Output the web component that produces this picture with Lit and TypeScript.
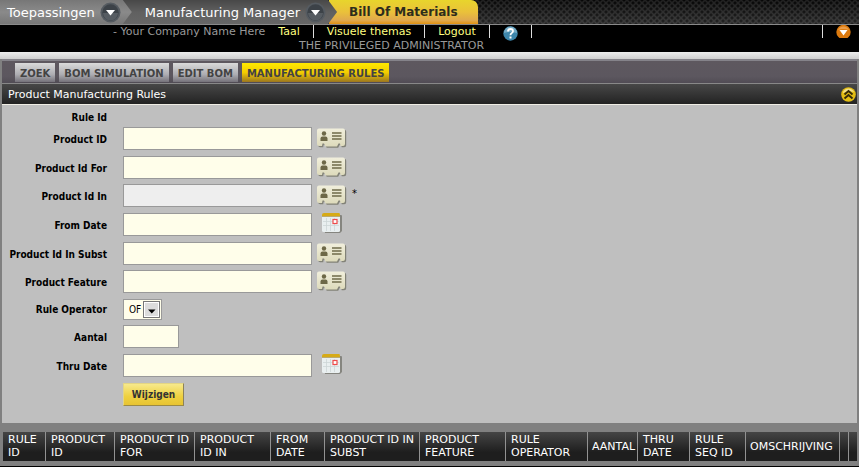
import { LitElement, html, css } from "lit";
import { customElement } from "lit/decorators.js";

type Field = { id: string; label: string; kind: "lookup" | "date" | "select" | "short" | "text"; tight?: boolean; readonly?: boolean };

const FIELDS: Field[] = [
  { id: "productId", label: "Product ID", kind: "lookup" },
  { id: "productIdFor", label: "Product Id For", kind: "lookup", tight: true },
  { id: "productIdIn", label: "Product Id In", kind: "lookup", readonly: true },
  { id: "fromDate", label: "From Date", kind: "date" },
  { id: "productIdInSubst", label: "Product Id In Subst", kind: "lookup", tight: true },
  { id: "productFeature", label: "Product Feature", kind: "lookup" },
  { id: "ruleOperator", label: "Rule Operator", kind: "select" },
  { id: "quantity", label: "Aantal", kind: "short" },
  { id: "thruDate", label: "Thru Date", kind: "date" },
];

const COLUMNS: [string, number][] = [
  ["RULE ID", 42], ["PRODUCT ID", 69], ["PRODUCT ID FOR", 80], ["PRODUCT ID IN", 76],
  ["FROM DATE", 54], ["PRODUCT ID IN SUBST", 95], ["PRODUCT FEATURE", 86],
  ["RULE OPERATOR", 82], ["AANTAL", 50], ["THRU DATE", 52], ["RULE SEQ ID", 56],
  ["OMSCHRIJVING", 94], ["", 9], ["", 9],
];

const cardIcon = html`<svg width="30" height="21" viewBox="0 0 30 21" aria-hidden="true">
  <defs><linearGradient id="paper" x1="0" y1="0" x2="0" y2="1"><stop offset="0" stop-color="#f1efdc"/><stop offset="1" stop-color="#dddabb"/></linearGradient></defs>
  <path transform="translate(1.200 1.200)" d="M2 .5H26Q28 .5 28 2.500V16Q28 18 26 18H23.500L23 15.500H21.500L20 18.500H8.500L7 15.500H5.500L5 18H2Q0 18 0 16V2.500Q0 .5 2 .5Z" fill="#828277"/>
  <path d="M2 .5H26Q28 .5 28 2.500V16Q28 18 26 18H23.500L23 15.500H21.500L20 18.500H8.500L7 15.500H5.500L5 18H2Q0 18 0 16V2.500Q0 .5 2 .5Z" fill="url(#paper)"/>
  <circle cx="7" cy="5.500" r="2.200" fill="#6d6847"/>
  <path d="M3.500 13V10.500Q3.500 8.500 5.500 8.500H8.500Q10.500 8.500 10.500 10.500V13Z" fill="#6d6847"/>
  <path d="M15 5H24.500M15 8H24.500M15 11H24.500" stroke="#6f6b49" stroke-width="1.400"/>
</svg>`;

const calendarIcon = html`<svg width="20" height="20" viewBox="0 0 20 20" aria-hidden="true">
  <path d="M2 2H19Q20 2 20 3V18L18 20H3Z" fill="#85857f"/>
  <rect x="0" y="1" width="18" height="18" rx="1.500" fill="#e9eff0"/>
  <path d="M0 3V1.500Q0 0 2 0H17Q18 0 18 1.500V3Z" fill="#d6aa16"/>
  <path d="M0 3.500H18" stroke="#a88c3a" stroke-width=".7"/>
  <path d="M1 8.500H17M1 12.500H17M4.500 5V18M8.500 5V18M12.500 5V18" stroke="#cdd5d7" stroke-width=".8"/>
  <rect x="11" y="6.500" width="4" height="4" fill="#fff" stroke="#ee4b4b" stroke-width="1.200"/>
</svg>`;

const roundArrow = html`<svg width="21" height="21" viewBox="0 0 21 21" aria-hidden="true">
  <circle cx="10.500" cy="10.500" r="10" fill="#555b61"/>
  <circle cx="10.500" cy="10.500" r="8.200" fill="#3c4248"/>
  <path d="M3 11A7.500 7.500 0 0 0 18 11Z" fill="#565c62"/>
  <path d="M6 8H15L10.500 13.500Z" fill="#fff"/>
</svg>`;

const helpIcon = html`<svg width="15" height="15" viewBox="0 0 15 15" aria-hidden="true">
  <circle cx="7.500" cy="7.500" r="7.200" fill="#3d86ab"/>
  <path d="M1 7A6.500 6.500 0 0 1 14 7Q7 5 1 7Z" fill="#75abc5"/>
  <path d="M5 5.500Q5 3 7.500 3T10 5.300Q10 6.500 8.500 7.300Q7.500 8 7.500 9.200" fill="none" stroke="#fff" stroke-width="1.800"/>
  <rect x="6.500" y="10.500" width="2" height="2" fill="#fff"/>
</svg>`;

const orangeIcon = html`<svg width="15" height="13" viewBox="0 0 15 13" aria-hidden="true">
  <circle cx="7.500" cy="7" r="7.200" fill="#dc7a0e"/>
  <path d="M2 5A6 6 0 0 1 13 5Q7 3 2 5Z" fill="#eb9d48"/>
  <path d="M3.500 5H11.500L7.500 10.500Z" fill="#fff"/>
</svg>`;

const collapseIcon = html`<svg width="15" height="15" viewBox="0 0 15 15" aria-hidden="true">
  <circle cx="7.500" cy="7.500" r="7.300" fill="#e3bd12"/>
  <path d="M2 5A6 6 0 0 1 13 5Q7 3 2 6Z" fill="#f3e08a"/>
  <path d="M3.500 7.500L7.500 4L11.500 7.500M3.500 11.500L7.500 8L11.500 11.500" fill="none" stroke="#352a08" stroke-width="1.900"/>
</svg>`;

@customElement("app-root")
export class AppRoot extends LitElement {
  static styles = css`
    :host { display: block; min-height: 100vh; background: #000; font-family: "DejaVu Sans", Verdana, sans-serif; font-size: 11px; }
    * { box-sizing: border-box; }
    a { text-decoration: none; color: inherit; }
    button { font: inherit; padding: 0; border: 0; background: none; cursor: pointer; }
    svg { display: block; }

    .apps { display: flex; height: 25px; border-bottom: 1px solid #8a8a8a; font-size: 13px; color: #fff;
      background-color: #333;
      background-image: linear-gradient(rgba(0,0,0,.35), rgba(80,80,80,.35)), radial-gradient(circle, #0c0c0c 1px, transparent 2px), radial-gradient(circle, #0c0c0c 1px, transparent 2px);
      background-size: auto, 6px 6px, 6px 6px; background-position: 0 0, 0 0, 3px 3px; }
    .crumb { display: flex; align-items: center; height: 24px; }
    .crumb button { display: block; }
    .first, .second { position: relative; gap: 5px;
      clip-path: polygon(0 0, calc(100% - 9px) 0, 100% 50%, calc(100% - 9px) 100%, 0 100%); }
    .first { z-index: 2; padding: 0 11px 0 7px; background: linear-gradient(#777, #8a8a8a 50%, #777); }
    .second { z-index: 1; margin-left: -12px; padding: 0 11px 0 25px; background: linear-gradient(#484848, #606060 50%, #666); }
    .current { margin-left: -8px; padding: 0 20px; border-radius: 0 7px 0 0; color: #2d2d1c; font-weight: bold;
      font-size: 12px; background: linear-gradient(#e8d52c, #eac13a 50%, #dfa84e 85%, #e2920f); }

    .user { display: flex; align-items: flex-start; height: 27px; color: #999; }
    .links { flex: 1; padding-left: 113px; }
    .line { display: flex; height: 14px; line-height: 14px; }
    .line a { padding: 0 13px; color: #ffff80; border-right: 1px solid #ddd; height: 13px; }
    .line .help { padding-top: 1px; }
    .who { padding-left: 186px; line-height: 13px; }
    .pref { padding: 0 8px 0 13px; border-left: 1px solid #ddd; height: 13px; }

    .page { padding: 7px 2px 5px; background: linear-gradient(#eee, #cfcfcf) top / 100% 7px no-repeat #808080; }
    .tabs { display: flex; gap: 4px; height: 24px; padding: 2px 13px 1px; border-top: 2px solid #85838a;
      background: linear-gradient(#5e585f, #5c575f 70%, #514c55); font-size: 10px; font-weight: bold; }
    .tabs a { line-height: 21px; padding: 0 5px; background: linear-gradient(#dadada, #adadb2 60%, #75727a); color: #434343; }
    .tabs .on { background: linear-gradient(#ffe900, #f3cd00 50%, #9b7620); }
    .title { display: flex; justify-content: space-between; align-items: center; height: 22px; margin: 0; padding: 0 1px 0 6px;
      border-top: 1px solid #888; border-bottom: 1px solid #f0eee5; color: #fff; background: linear-gradient(#474747, #232323);
      font-size: 11px; font-weight: normal; }
    form { background: #bfbfbf; padding: 6px 0 11px; }
    .row { display: grid; grid-template-columns: 105px 1fr; column-gap: 16px; height: 29px; align-items: start;
      font: bold 10px "DejaVu Sans Condensed", "DejaVu Sans", sans-serif; }
    .row.tight { height: 28px; }
    .row.select { height: 26px; }
    .row.head { height: 16px; }
    .row > label, .row > .label { text-align: right; line-height: 25px; }
    .row.head .label { line-height: 14px; }
    .row.select > label { line-height: 21px; }
    .control { display: flex; align-items: flex-start; }
    input { width: 189px; height: 23px; padding: 2px 4px; border: 1px solid #999; border-radius: 0; background: #fffeea; font: 11px "DejaVu Sans", sans-serif; }
    input:read-only { background: #eeeeee; }
    .short input { width: 56px; }
    .pick { margin: 1px 5px 0; }
    .date .pick { margin: 0 10px; }
    .star { line-height: 20px; font-weight: normal; font-size: 11px; }
    .drop { display: grid; width: 39px; height: 21px; }
    .drop select, .drop svg { grid-area: 1 / 1; }
    .drop select { appearance: none; border: 1px solid #999; border-radius: 0; background: #fffeea; padding: 0 5px;
      font: 10px "DejaVu Sans Condensed", "DejaVu Sans", sans-serif; }
    .drop svg { justify-self: end; align-self: center; margin-right: 2px; pointer-events: none; }
    .save { justify-self: start; height: 23px; width: 61px; color: #333; font-weight: bold;
      background: linear-gradient(#f7e98c, #eed03f 60%, #e8c432); border: 1px solid #e3d584; border-right-color: #8b825b; border-bottom-color: #9b8a45; grid-column: 2; }

    .list { margin-top: 9px; padding: 0 0 0 1px; }
    table { width: 100%; table-layout: fixed; border-collapse: separate; border-spacing: 0; }
    th { height: 29px; padding: 1px 2px 2px 5px; border-left: 1px solid #929292; background: linear-gradient(#454545, #1e1e1e 70%);
      color: #fff; text-align: left; font-size: 11px; font-weight: normal; line-height: 13px; vertical-align: middle; }
    th:first-child { border-left: 0; }
    th.one { white-space: nowrap; padding: 1px 0 2px 4px; }
    .w42 { width: 42px; } .w69 { width: 69px; } .w80 { width: 80px; } .w76 { width: 76px; } .w54 { width: 54px; }
    .w95 { width: 95px; } .w86 { width: 86px; } .w82 { width: 82px; } .w50 { width: 50px; } .w52 { width: 52px; }
    .w56 { width: 56px; } .w94 { width: 94px; } .w9 { width: 9px; }
  `;

  private control(f: Field) {
    if (f.kind === "select") {
      return html`<div class="drop"><select id=${f.id}><option>OF</option></select>
        <svg width="17" height="17" viewBox="0 0 17 17" aria-hidden="true">
          <rect x=".5" y=".5" width="16" height="16" fill="#fff" stroke="#777"/>
          <rect x="2" y="2" width="13" height="13" fill="#dcdcdc"/>
          <path d="M5 8.500H12.500L8.750 12.500Z" fill="#000"/>
        </svg></div>`;
    }
    return html`<input id=${f.id} type="text" ?readonly=${f.readonly}>
      ${f.kind === "lookup" ? html`<button type="button" class="pick" aria-label="Lookup">${cardIcon}</button>` : ""}
      ${f.kind === "date" ? html`<button type="button" class="pick" aria-label="Calendar">${calendarIcon}</button>` : ""}
      ${f.readonly ? html`<span class="star">*</span>` : ""}`;
  }

  render() {
    return html`
      <nav class="apps">
        <div class="crumb first"><a href="#">Toepassingen</a><button aria-label="Open applications">${roundArrow}</button></div>
        <div class="crumb second"><a href="#">Manufacturing Manager</a><button aria-label="Open menu">${roundArrow}</button></div>
        <a class="crumb current" href="#">Bill Of Materials</a>
      </nav>
      <header class="user">
        <div class="links">
          <div class="line"><span>- Your Company Name Here</span><a href="#">Taal</a><a href="#">Visuele themas</a><a href="#">Logout</a><a class="help" href="#" aria-label="Help">${helpIcon}</a></div>
          <div class="who">THE PRIVILEGED ADMINISTRATOR</div>
        </div>
        <button class="pref" aria-label="Collapse header">${orangeIcon}</button>
      </header>
      <main class="page">
        <nav class="tabs">
          <a href="#">ZOEK</a><a href="#">BOM SIMULATION</a><a href="#">EDIT BOM</a><a class="on" href="#">MANUFACTURING RULES</a>
        </nav>
        <h1 class="title">Product Manufacturing Rules<button aria-label="Collapse">${collapseIcon}</button></h1>
        <form>
          <div class="row head"><span class="label">Rule Id</span></div>
          ${FIELDS.map((f) => html`<div class="row ${f.kind} ${f.tight ? "tight" : ""}">
            <label for=${f.id}>${f.label}</label><div class="control">${this.control(f)}</div>
          </div>`)}
          <div class="row"><button type="button" class="save">Wijzigen</button></div>
        </form>
        <div class="list">
          <table><thead><tr>
            ${COLUMNS.map(([name, w]) => html`<th class="w${w} ${name.includes(" ") ? "" : "one"}">${name}</th>`)}
          </tr></thead></table>
        </div>
      </main>`;
  }
}
